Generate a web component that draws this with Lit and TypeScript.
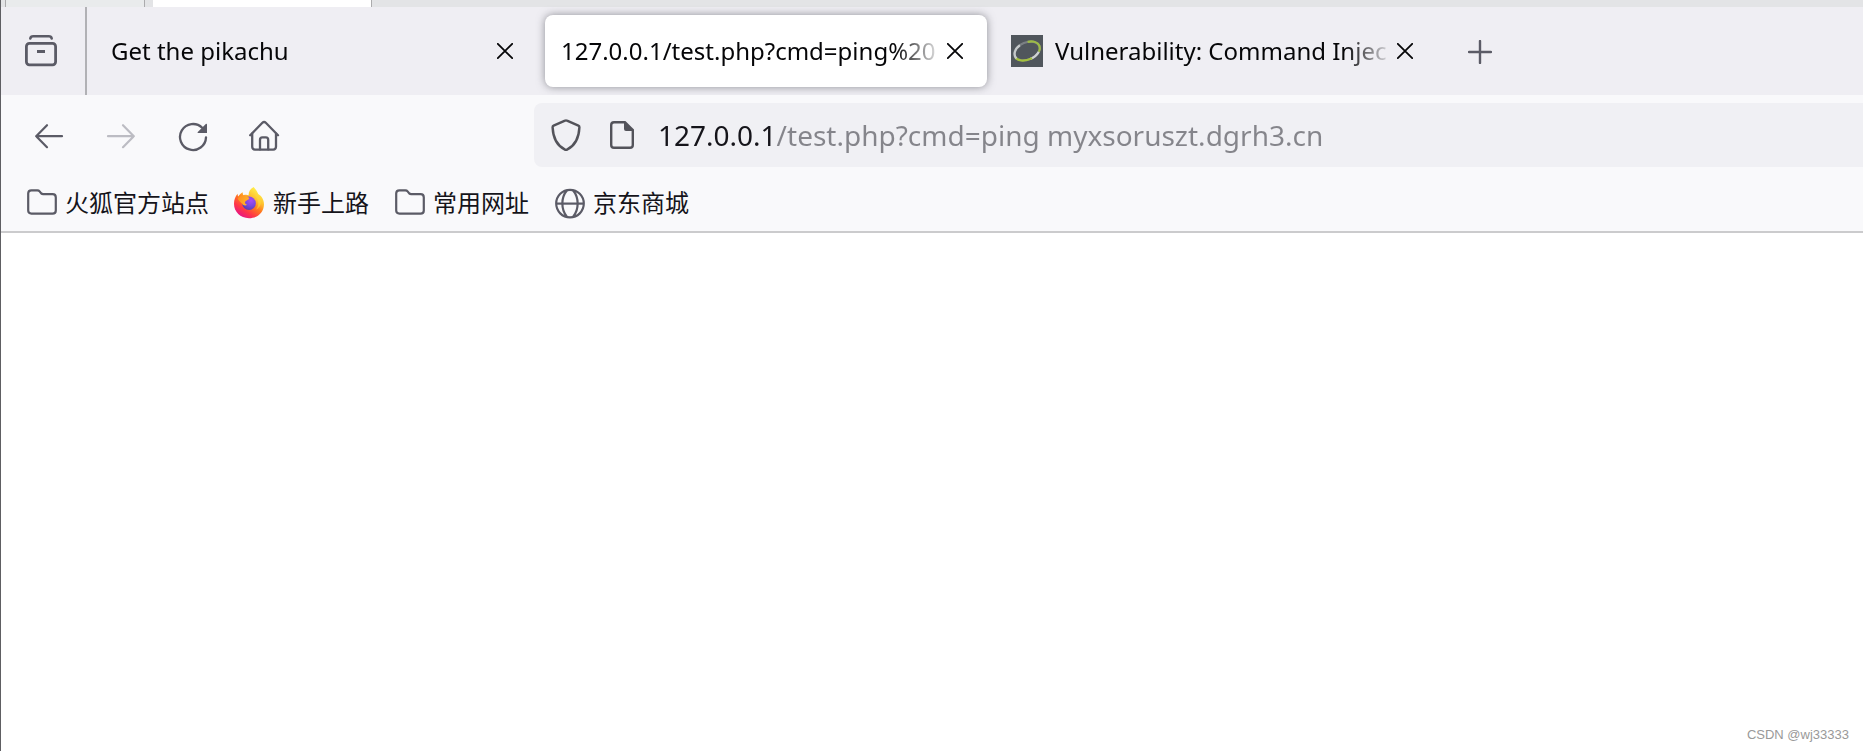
import { LitElement, html, css, nothing } from "lit";
import { customElement, property, state } from "lit/decorators.js";

const closeIcon = html`<svg width="16" height="16" viewBox="0 0 16 16" aria-hidden="true">
  <path d="M0.8 0.8 15.2 15.2M15.2 0.8 0.8 15.2" fill="none" stroke="currentColor" stroke-width="1.8" stroke-linecap="round" />
</svg>`;

const viewIcon = html`<svg width="32" height="32" viewBox="0 0 32 32" fill="none" stroke="currentColor" aria-hidden="true">
  <path d="M5.3 3.4C5.6 2 6.6 1.3 8.2 1.3H23.8C25.4 1.3 26.4 2 26.7 3.4" stroke-width="2.6" stroke-linecap="round" />
  <rect x="1.4" y="8.4" width="29.2" height="21.4" rx="3" stroke-width="2.8" />
  <path d="M12 16.5H20" stroke-width="3" />
</svg>`;

const plusIcon = html`<svg width="24" height="24" viewBox="0 0 24 24" aria-hidden="true">
  <path d="M12 1V23M1 12H23" fill="none" stroke="currentColor" stroke-width="2.4" stroke-linecap="round" />
</svg>`;

const backIcon = html`<svg width="32" height="32" viewBox="0 0 32 32" fill="none" stroke="currentColor" stroke-width="2.2" stroke-linecap="round" stroke-linejoin="round" aria-hidden="true">
  <path d="M29 16.2H3.2M14 5.2 3.2 16.2 14 27.2" />
</svg>`;

const forwardIcon = html`<svg width="32" height="32" viewBox="0 0 32 32" fill="none" stroke="currentColor" stroke-width="2.2" stroke-linecap="round" stroke-linejoin="round" aria-hidden="true">
  <path d="M3 16.2H28.8M18 5.2 28.8 16.2 18 27.2" />
</svg>`;

const reloadIcon = html`<svg width="32" height="32" viewBox="0 0 32 32" fill="none" aria-hidden="true">
  <path d="M29 17.4A13 13 0 1 1 25.2 7.8" stroke="currentColor" stroke-width="2.3" stroke-linecap="round" />
  <path d="M30 4.6V13H21.2C20.6 13 20.4 12.4 20.8 12L28.8 4C29.3 3.5 30 3.9 30 4.6Z" fill="currentColor" />
</svg>`;

const homeIcon = html`<svg width="32" height="32" viewBox="1 0 32 32" fill="none" stroke="currentColor" stroke-width="2.3" stroke-linecap="round" stroke-linejoin="round" aria-hidden="true">
  <path d="M2.2 15.2 14.4 2.8C15.4 1.8 16.8 1.8 17.8 2.8L30 15.2" />
  <path d="M4.2 13.6V26.6C4.2 28.4 5.2 29.6 7 29.6H25.2C27 29.6 28 28.4 28 26.6V13.6" />
  <path d="M12 29.4V20C12 18.4 13 17.4 14.4 17.4H17.8C19.2 17.4 20.2 18.4 20.2 20V29.4" />
</svg>`;

const shieldIcon = html`<svg width="32" height="32" viewBox="0 0 32 32" fill="none" stroke="currentColor" stroke-width="2.4" stroke-linejoin="round" aria-hidden="true">
  <path d="M15 1.7Q16 1.1 17 1.7L28.4 6.6Q29.5 7.1 29.4 8.4C29 18 25.6 26.4 17 30.6Q16 31.1 15 30.6C6.4 26.4 3 18 2.6 8.4Q2.5 7.1 3.6 6.6Z" />
</svg>`;

const pageIcon = html`<svg width="32" height="32" viewBox="0 0 32 32" fill="none" aria-hidden="true">
  <path d="M18.5 3.2H8Q5.2 3.2 5.2 6V26Q5.2 28.8 8 28.8H24Q26.8 28.8 26.8 26V11.5" stroke="currentColor" stroke-width="2.4" />
  <path d="M18 2H19.4L28 10.4V12H20Q18 12 18 10Z" fill="currentColor" />
</svg>`;

const folderIcon = html`<svg width="32" height="32" viewBox="0 0 32 32" fill="none" aria-hidden="true">
  <path d="M2.2 6.6Q2.2 3.4 5.4 3.4H11.4Q12.8 3.4 13.6 4.4L15.2 6.4Q16 7.2 17.2 7.2H26.6Q29.8 7.2 29.8 10.4V23.4Q29.8 26.6 26.6 26.6H5.4Q2.2 26.6 2.2 23.4Z" stroke="currentColor" stroke-width="2.2" stroke-linejoin="round" />
</svg>`;

const globeIcon = html`<svg width="32" height="32" viewBox="0 0 32 32" fill="none" stroke="currentColor" stroke-width="2.2" aria-hidden="true">
  <circle cx="16" cy="16.6" r="13.8" />
  <path d="M2.4 16.6H29.6" />
  <path d="M13 3.2C6.8 10.6 6.8 22.6 13 30M19 3.2C25.2 10.6 25.2 22.6 19 30" />
</svg>`;

const foxIcon = html`<svg width="32" height="32" viewBox="1 0 32 32" aria-hidden="true">
  <defs>
    <linearGradient id="body" x1="0.85" y1="0.1" x2="0.25" y2="1">
      <stop offset="0" stop-color="#fff44f" />
      <stop offset="0.3" stop-color="#ffc02e" />
      <stop offset="0.5" stop-color="#ff7a1f" />
      <stop offset="0.75" stop-color="#ff3647" />
      <stop offset="1" stop-color="#e3118e" />
    </linearGradient>
    <radialGradient id="core" cx="0.65" cy="0.3" r="0.8">
      <stop offset="0" stop-color="#a94cf5" />
      <stop offset="0.5" stop-color="#7a46e0" />
      <stop offset="1" stop-color="#4a3ea8" />
    </radialGradient>
    <linearGradient id="head" x1="0" y1="0" x2="1" y2="0.6">
      <stop offset="0" stop-color="#ff8a1c" />
      <stop offset="1" stop-color="#ffb52a" />
    </linearGradient>
  </defs>
  <path d="M20.6 0C22.6 2.4 24.2 4.2 25.2 7C28 8.6 31 12.2 31 17.4C30.8 25.4 24.4 31.2 16 31.2C7.4 31.2 1 24.8 1 16.8C1 12.8 2.4 9.4 4.6 6.8C4.6 8 4.8 8.8 5.2 9.4C6.4 7.6 8 6.2 9.8 5.2C9.6 6.4 9.8 7.4 10.4 8.2C12.4 7.4 14.2 7.6 15.6 8.2C15.6 4.6 17.4 1.6 20.6 0Z" fill="url(#body)" />
  <path d="M22.4 9.2C26 13 26.4 18.6 23 22.4C26.6 21 28.4 17.4 27.8 13.4C27 10.4 25 8.2 22 6.4Z" fill="#ffd93a" opacity="0.6" />
  <circle cx="16" cy="16.2" r="6.8" fill="url(#core)" />
  <path d="M4.6 11.6C7 8.4 9.2 8 11.2 8.8C13.4 9.8 15 9.8 16.4 11C15.6 13.4 12.6 13.2 12 15.4C12 16.6 13 17.4 14.2 17.8C12.4 19 10 18.4 9.2 16.8C7.4 15.4 5.6 13.6 4.6 11.6Z" fill="url(#head)" />
</svg>`;

const ringIcon = html`<svg width="32" height="32" viewBox="0 0 32 32" aria-hidden="true">
  <rect width="32" height="32" fill="#50565c" />
  <g fill="none" stroke-width="2.2" transform="rotate(-22 16 16)">
    <ellipse cx="16" cy="16" rx="13.4" ry="8.6" stroke="#7b8084" />
    <path d="M20 7.8C25 8.6 29.4 11.6 29.4 16C29.4 18 28.4 19.8 26.6 21.2" stroke="#9dbb45" />
    <path d="M26.6 21.2C23 24 20 24.6 16 24.6" stroke="#cfd2d2" />
    <path d="M18 24.6C9 25 3.6 21.6 2.8 17.6" stroke="#a4c13c" />
    <path d="M3.4 19C1.4 13 7 9 11.6 8" stroke="#c5c9ca" />
  </g>
</svg>`;

@customElement("browser-tab")
class BrowserTab extends LitElement {
  @property() label = "";
  @property({ type: Boolean, reflect: true }) selected = false;
  @property({ type: Boolean }) favicon = false;

  static styles = css`
    :host {
      display: flex;
      flex: 0 1 442px;
      min-width: 0;
      box-sizing: border-box;
      align-items: center;
      height: 72px;
      padding: 0 8px 0 16px;
      border-radius: 8px;
      color: #060608;
    }
    :host([selected]) {
      background: #fff;
      box-shadow: 0 0 8px rgba(90, 90, 98, 0.65);
    }
    button {
      font: inherit;
      color: inherit;
      border: 0;
      background: none;
      padding: 0;
    }
    .title {
      display: flex;
      flex: 1;
      align-items: center;
      gap: 12px;
      min-width: 0;
      height: 56px;
      text-align: left;
    }
    .text {
      flex: 1;
      min-width: 0;
      overflow: hidden;
      white-space: nowrap;
      line-height: 40px;
      mask-image: linear-gradient(to left, transparent, #000 48px);
    }
    .close {
      display: flex;
      align-items: center;
      justify-content: center;
      width: 24px;
      height: 48px;
      margin-right: 12px;
      flex: none;
    }
    svg {
      display: block;
      flex: none;
    }
  `;

  render() {
    return html`
      <button class="title" role="tab" aria-selected=${this.selected ? "true" : "false"}>
        ${this.favicon ? ringIcon : nothing}
        <span class="text">${this.label}</span>
      </button>
      <button class="close" aria-label="Close tab">${closeIcon}</button>
    `;
  }
}

@customElement("app-root")
class AppRoot extends LitElement {
  @state() private address = "127.0.0.1/test.php?cmd=ping myxsoruszt.dgrh3.cn";

  private tabs = [
    { label: "Get the pikachu" },
    { label: "127.0.0.1/test.php?cmd=ping%20", selected: true },
    { label: "Vulnerability: Command Injec", favicon: true },
  ];

  private bookmarks = [
    { label: "火狐官方站点", icon: folderIcon },
    { label: "新手上路", icon: foxIcon },
    { label: "常用网址", icon: folderIcon },
    { label: "京东商城", icon: globeIcon },
  ];

  static styles = css`
    :host {
      display: flex;
      flex-direction: column;
      box-sizing: border-box;
      min-height: 100vh;
      border-left: 1px solid #5e5e62;
      background: #fff;
      color: #15141a;
      font-family: "Noto Sans", "Noto Sans CJK SC", sans-serif;
      font-size: 24px;
    }
    button {
      display: flex;
      align-items: center;
      justify-content: center;
      padding: 0;
      border: 0;
      background: none;
      color: #5b5b66;
    }
    svg {
      display: block;
      flex: none;
    }
    .behind {
      display: flex;
      height: 7px;
      padding-left: 4px;
      background: #e3e4e6;
    }
    .behind-tab {
      box-sizing: border-box;
      width: 140px;
      border: solid #ababad;
      border-width: 0 1px;
      background: #e9ebec;
    }
    .behind-current {
      box-sizing: border-box;
      width: 219px;
      margin-left: 8px;
      border-right: 1px solid #ababad;
      background: #fff;
    }
    .strip {
      display: flex;
      align-items: center;
      height: 88px;
      background: #efeef3;
    }
    .view {
      box-sizing: border-box;
      width: 86px;
      height: 88px;
      padding-right: 4px;
      border-right: 2px solid #b1b1b5;
      margin-right: 8px;
      flex: none;
    }
    .tabs {
      display: flex;
      flex: 0 1 1342px;
      gap: 8px;
      min-width: 0;
    }
    .new {
      width: 64px;
      height: 64px;
      padding-top: 2px;
      margin-left: 11px;
      flex: none;
    }
    .nav {
      display: flex;
      align-items: center;
      height: 80px;
      padding-left: 16px;
      background: #f9f9fb;
    }
    .actions {
      display: flex;
      flex: none;
      gap: 8px;
      margin-right: 237px;
    }
    .actions button {
      width: 64px;
      height: 64px;
      padding-top: 2px;
    }
    .actions button:disabled {
      color: #bcbcc3;
    }
    .url {
      display: flex;
      flex: 1;
      align-items: center;
      min-width: 0;
      height: 64px;
      padding-left: 4px;
      border-radius: 8px 0 0 8px;
      background: #f0f0f4;
    }
    .url button {
      width: 56px;
      height: 56px;
      flex: none;
      color: #53535a;
    }
    .address {
      flex: 1;
      min-width: 0;
      height: 56px;
      margin-left: 8px;
      padding: 0;
      border: 0;
      outline: 0;
      font: inherit;
      font-size: 28px;
      color: transparent;
      caret-color: #15141a;
      background: linear-gradient(to right, #15141a 116px, #85858b 116px);
      background-clip: text;
      -webkit-background-clip: text;
    }
    .bookmarks {
      display: flex;
      gap: 25px;
      box-sizing: border-box;
      height: 58px;
      padding: 0 24px 0 25px;
      border-bottom: 2px solid #cbcbcd;
      background: #f9f9fb;
    }
    .bookmarks a {
      display: flex;
      align-items: center;
      gap: 7px;
      color: inherit;
      text-decoration: none;
      white-space: nowrap;
      line-height: 32px;
    }
    .bookmarks svg {
      color: #5b5b66;
    }
    .page {
      display: flex;
      flex: 1;
      align-items: flex-end;
      justify-content: flex-end;
      padding: 0 14px 8px;
    }
    .mark {
      font-family: "Liberation Sans", sans-serif;
      font-size: 13px;
      line-height: 16px;
      color: #999;
    }
  `;

  render() {
    return html`
      <div class="behind"><div class="behind-tab"></div><div class="behind-current"></div></div>
      <header class="strip">
        <button class="view" aria-label="View recent browsing">${viewIcon}</button>
        <div class="tabs" role="tablist">
          ${this.tabs.map(
            (t) => html`<browser-tab .label=${t.label} ?selected=${t.selected} ?favicon=${t.favicon}></browser-tab>`
          )}
        </div>
        <button class="new" aria-label="New tab">${plusIcon}</button>
      </header>
      <nav class="nav">
        <div class="actions">
          <button aria-label="Back">${backIcon}</button>
          <button aria-label="Forward" disabled>${forwardIcon}</button>
          <button aria-label="Reload">${reloadIcon}</button>
          <button aria-label="Home">${homeIcon}</button>
        </div>
        <div class="url">
          <button aria-label="Tracking protection">${shieldIcon}</button>
          <button aria-label="Site information">${pageIcon}</button>
          <input class="address" type="text" aria-label="Address" spellcheck="false" .value=${this.address} />
        </div>
      </nav>
      <div class="bookmarks">
        ${this.bookmarks.map((b) => html`<a href="#">${b.icon}<span>${b.label}</span></a>`)}
      </div>
      <main class="page"><span class="mark">CSDN @wj33333</span></main>
    `;
  }
}
